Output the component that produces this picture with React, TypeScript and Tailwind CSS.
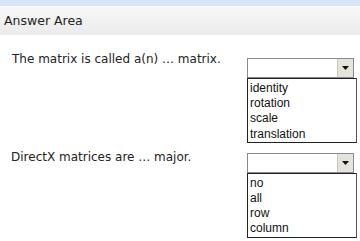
import React from "react";

function Dropdown({ items }: { items: string[] }) {
  return (
    <div className="flex flex-col w-[110px]">
      <div className="flex h-[20px] w-[107px] border border-[#8a8a8a] bg-white">
        <div className="flex-1" />
        <div className="w-[16px] h-full flex items-center justify-center bg-[#e4e4dc] border-l border-[#c8c8c0]">
          <svg width="7" height="4" viewBox="0 0 7 4">
            <path d="M0 0 H7 L3.5 4 Z" fill="#111" />
          </svg>
        </div>
      </div>
      <div className="border border-[#222] border-r-[#555] bg-white pl-[2px] pt-[2px] font-['Liberation_Sans'] text-[12px] leading-[15.2px] text-[#111]">
        {items.map((it) => (
          <div key={it}>{it}</div>
        ))}
      </div>
    </div>
  );
}

export default function App() {
  return (
    <div className="w-[360px] h-[241px] bg-white overflow-hidden font-['DejaVu_Sans',sans-serif] text-[#222]">
      <div className="h-[6px] bg-[#d7e6f6]" />
      <div className="h-[29px] bg-gradient-to-b from-[#f8f8f8] to-[#ebebeb] flex items-center pl-[4px] pt-[2px] text-[12.5px]">
        Answer Area
      </div>
      <div className="flex flex-col pt-[16px] gap-[6px]">
        <div className="flex">
          <div className="w-[247px] pl-[12px] text-[12px] leading-[16px]">
            The matrix is called a(n) … matrix.
          </div>
          <div className="pt-[7px]">
            <Dropdown items={["identity", "rotation", "scale", "translation"]} />
          </div>
        </div>
        <div className="flex">
          <div className="w-[247px] pl-[11px] text-[12px] leading-[16px]">
            DirectX matrices are … major.
          </div>
          <div className="pt-[4px]">
            <Dropdown items={["no", "all", "row", "column"]} />
          </div>
        </div>
      </div>
    </div>
  );
}
